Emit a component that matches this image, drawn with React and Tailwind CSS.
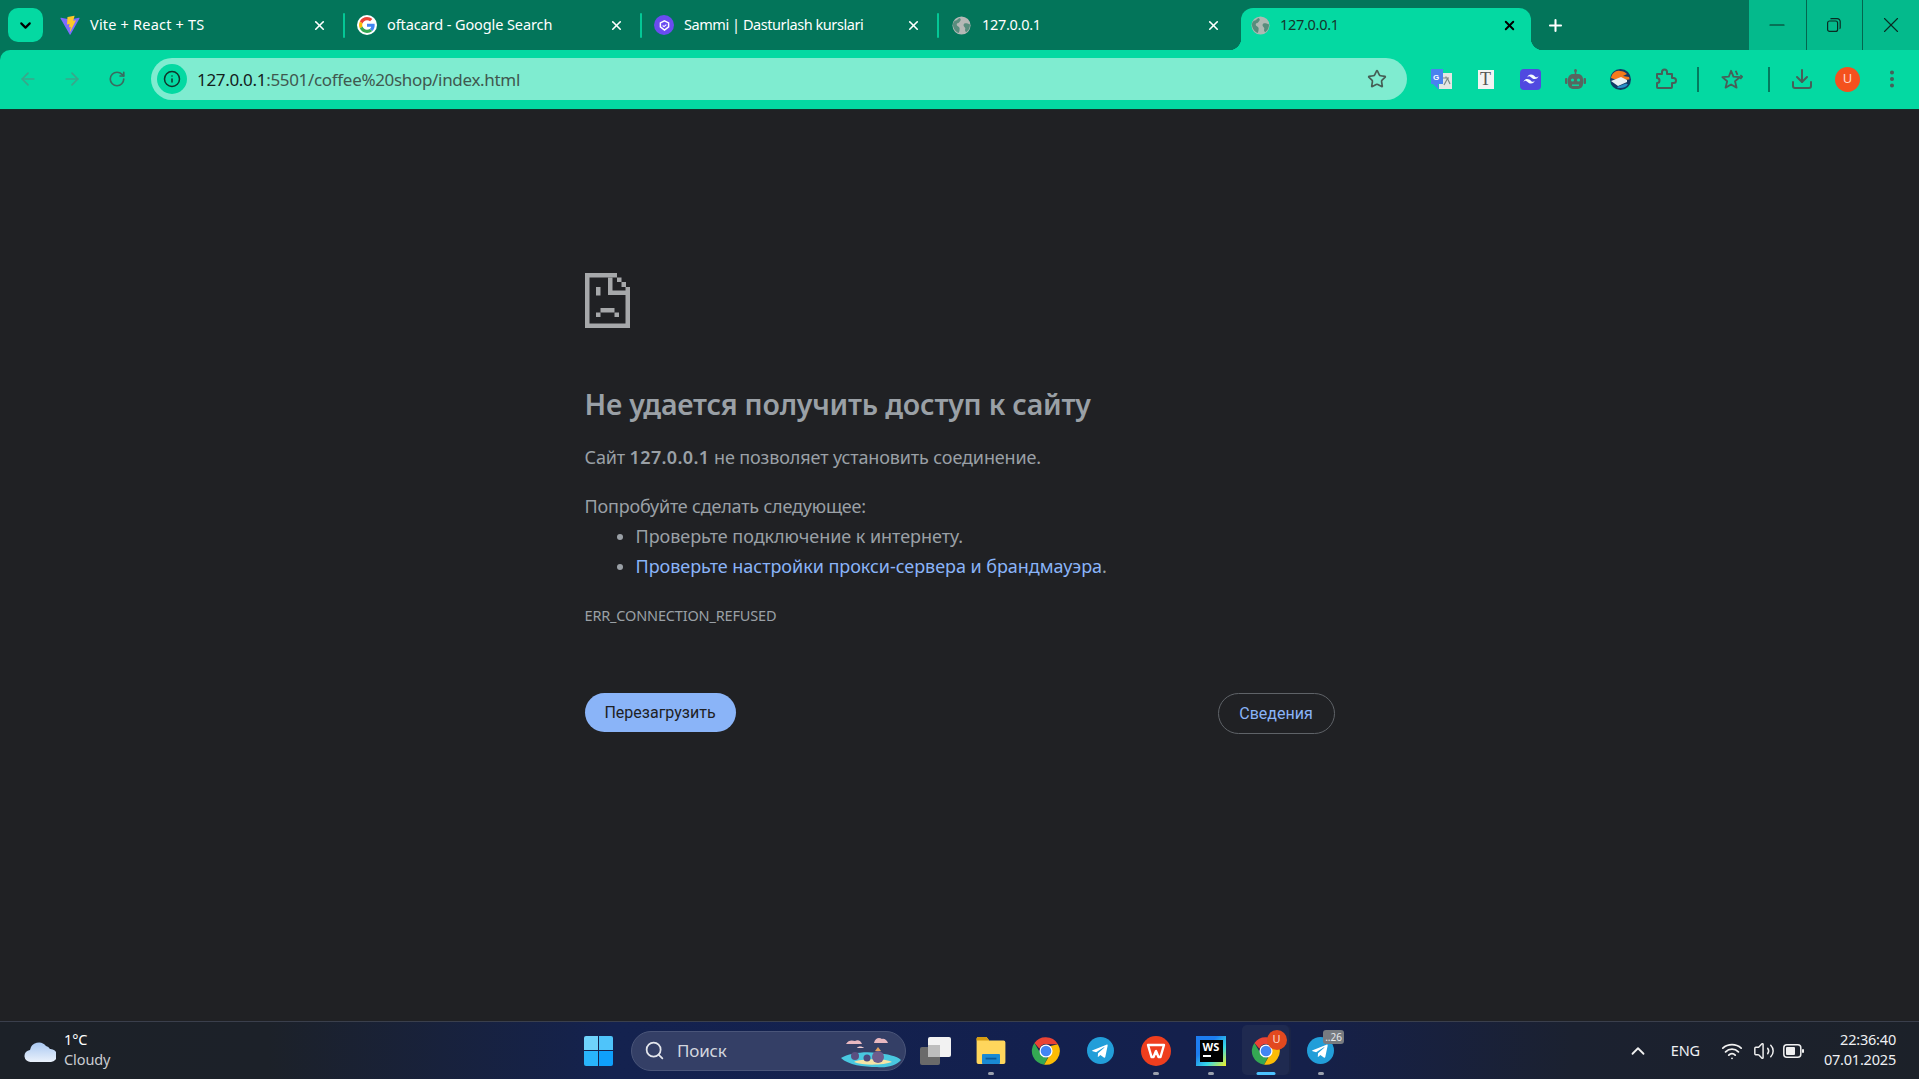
import React from "react";
import { ArrowLeft, ArrowRight, RotateCw, Star, X, Plus, Minus, Info, Download, EllipsisVertical, ChevronUp, ChevronDown, Search, Wifi, Volume2 } from "lucide-react";

const seg = "font-['Noto_Sans','Liberation_Sans',sans-serif]";

const Globe = ({ c = "#b5b8b6" }) => (
  <svg width="19" height="19" viewBox="0 0 20 20">
    <circle cx="10" cy="10" r="9.5" fill={c} />
    <path d="M3 5c2 0 3-2 5-3 2 1 1 3 0 4-1 2-3 1-3 3 0 2 3 2 3 4 0 2 0 3-1 5C4 17 1 13 1 9c0-2 1-3 2-4zM13 8c2-1 4 0 6 1 0 3-1 6-4 8-2-1-1-3-1-4-1-2-3-3-1-5z" fill="#3a7d69" opacity="0.75" />
  </svg>
);

const Vite = () => (
  <svg width="20" height="21" viewBox="0 0 410 404">
    <path d="M399.6 59.5 215.9 388.2c-3.8 6.8-13.5 6.8-17.4.1L11.2 59.5c-4.2-7.4 2.1-16.3 10.4-14.8l183.9 32.9c1.2.2 2.4.2 3.5 0l180-32.8c8.3-1.5 14.7 7.3 10.6 14.7z" fill="#7f6bff" />
    <path d="M292.9 1.6 156.9 28.2c-2.2.4-3.9 2.3-4 4.6l-8.4 141.5c-.2 3.3 2.9 5.9 6.1 5.2l37.9-8.8c3.5-.8 6.7 2.3 6 5.9l-11.3 55.2c-.8 3.7 2.7 6.9 6.3 5.8l23.4-7.1c3.6-1.1 7.1 2.1 6.3 5.8l-17.9 86.6c-1.1 5.4 6.1 8.4 9.1 3.7l2-3.1 110.9-221.4c1.9-3.7-1.3-7.9-5.4-7.1l-39 7.5c-3.7.7-6.8-2.7-5.8-6.3l25.5-88.2c1-3.6-2.1-7.1-5.8-6.3z" fill="#ffc928" />
  </svg>
);

const GoogleG = () => (
  <div className="flex h-5 w-5 items-center justify-center rounded-full bg-white">
    <svg width="16" height="16" viewBox="0 0 48 48">
      <path fill="#EA4335" d="M24 9.5c3.5 0 6.7 1.2 9.2 3.6l6.9-6.9C35.9 2.4 30.5 0 24 0 14.6 0 6.5 5.4 2.6 13.2l8 6.2C12.5 13.7 17.8 9.5 24 9.5z" />
      <path fill="#4285F4" d="M47 24.5c0-1.6-.1-3.1-.4-4.5H24v9h12.9c-.6 3-2.2 5.5-4.7 7.2l7.7 6c4.5-4.2 7.1-10.3 7.1-17.7z" />
      <path fill="#FBBC05" d="M10.5 28.6c-.5-1.5-.8-3-.8-4.6s.3-3.2.8-4.6l-8-6.2C.9 16.5 0 20.1 0 24s.9 7.5 2.6 10.8l7.9-6.2z" />
      <path fill="#34A853" d="M24 48c6.5 0 11.9-2.1 15.9-5.8l-7.7-6c-2.2 1.5-4.9 2.3-8.2 2.3-6.2 0-11.5-4.2-13.4-9.9l-8 6.2C6.5 42.6 14.6 48 24 48z" />
    </svg>
  </div>
);

const Sammi = () => (
  <div className="flex h-5 w-5 items-center justify-center rounded-full bg-[#6a4cf0]">
    <svg width="11" height="11" viewBox="0 0 12 12" fill="none" stroke="#fff" strokeWidth="1.6">
      <path d="M6 1l4.5 2.2v4.2L6 11 1.5 7.4V3.200z" />
      <path d="M4 6l1.5 1.2L8 5" strokeWidth="1.2" />
    </svg>
  </div>
);

const Tab = ({ icon, title, track }) => (
  <div className="flex h-10 w-[297px] shrink-0 items-center">
    <div className="ml-[-1px] flex w-5 shrink-0 justify-center">{icon}</div>
    <span className={`ml-[10px] flex-1 text-[14.5px] text-white ${track} ${seg}`}>{title}</span>
    <X size={15} strokeWidth={2.6} className="mr-[16px] text-white" />
    <div className="mr-[13px] h-[25px] w-[2px] rounded bg-[#04c896]" />
  </div>
);

const WinBtn = ({ children, border }) => (
  <div className={`flex h-full w-[57.5px] items-center justify-center ${border ? "border-l border-[#04664e]" : ""}`}>{children}</div>
);

const Extension = ({ children }) => <div className="flex h-[45px] w-[45px] shrink-0 items-center justify-center">{children}</div>;

const ChromeIcon = ({ s = 30 }) => (
  <svg width={s} height={s} viewBox="0 0 48 48">
    <path fill="#EA4335" d="M24 2a22 22 0 0 1 19 11H24a11 11 0 0 0-10.5 7.5L5.5 11A22 22 0 0 1 24 2z" />
    <path fill="#34A853" d="M5.5 11l9.5 16.5a11 11 0 0 0 12 6.600L21 45.800A22 22 0 0 1 5.5 11z" />
    <path fill="#FBBC05" d="M43 13a22 22 0 0 1-22 32.800l9.5-16.500A11 11 0 0 0 31 16z" />
    <circle cx="24" cy="24" r="10.5" fill="#fff" />
    <circle cx="24" cy="24" r="8.5" fill="#4285F4" />
  </svg>
);

const Telegram = ({ s = 27 }) => (
  <svg width={s} height={s} viewBox="0 0 24 24">
    <circle cx="12" cy="12" r="12" fill="#229ed9" />
    <path d="M5 11.800l12.300-5c.7-.2 1.300.2 1 1.200l-2 9.600c-.2.800-.7 1-1.400.6l-3-2.300-1.500 1.400c-.3.300-.5.400-.8.400l.2-3.200 5.700-5.200c.3-.2 0-.4-.4-.2l-7 4.500-3-.9c-.7-.2-.7-.6-.1-.900z" fill="#fff" />
  </svg>
);

const TaskSlot = ({ children, dot, active }) => (
  <div className="relative flex h-[55px] w-[55px] shrink-0 items-center justify-center">
    {active && <div className="absolute left-[4px] top-[2px] h-[50px] w-[47px] rounded-[5px] bg-[#1f2a50] shadow-[2px_0_0_#1a2447]" />}
    <div className="relative flex items-center justify-center">{children}</div>
    {dot && <div className={`absolute bottom-[3px] left-1/2 h-[3px] -translate-x-1/2 rounded-full ${active ? "w-[19px] bg-[#4cc2ff]" : "w-[6px] bg-[#9aa0ad]"}`} />}
  </div>
);

export default function App() {
  return (
    <div className={`flex h-[1079px] w-[1919px] flex-col overflow-hidden bg-[#03755a] ${seg}`}>
      {/* tab strip */}
      <div className="flex h-[50px] shrink-0 bg-[#03755a]">
        <div className="ml-2 mt-2 flex h-[34px] w-[35px] shrink-0 items-center justify-center rounded-[10px] bg-[#04d9a2]">
          <ChevronDown size={17} strokeWidth={3} className="text-black" />
        </div>
        <div className="ml-[18px] mt-[5px] flex h-10">
          <Tab icon={<Vite />} title="Vite + React + TS" track="tracking-[0.2px]" />
          <Tab icon={<GoogleG />} title="oftacard - Google Search" track="tracking-[-0.1px]" />
          <Tab icon={<Sammi />} title="Sammi | Dasturlash kurslari" track="tracking-[-0.44px]" />
          <div className="flex h-10 w-[290px] shrink-0 items-center">
            <Globe />
            <span className="ml-[11px] flex-1 text-[14.5px] tracking-[-0.3px] text-white">127.0.0.1</span>
            <X size={15} strokeWidth={2.6} className="mr-[21px] text-white" />
          </div>
        </div>
        <div className="relative ml-[-1px] mt-[8px] flex h-[42px] w-[290px] shrink-0 items-center rounded-t-[12px] bg-[#04d9a2] pb-[8px] pl-[10px]">
          <div className="absolute bottom-0 left-[-12px] h-3 w-3 bg-[radial-gradient(circle_at_0_0,#03755a_12px,#04d9a2_12.5px)]" />
          <div className="absolute bottom-0 right-[-12px] h-3 w-3 bg-[radial-gradient(circle_at_100%_0,#03755a_12px,#04d9a2_12.5px)]" />
          <Globe c="#aeb9b3" />
          <span className="ml-[10px] flex-1 text-[14.5px] tracking-[-0.3px] text-[#14342b]">127.0.0.1</span>
          <X size={15} strokeWidth={3} className="mr-[14px] text-black" />
        </div>
        <div className="ml-[14px] flex h-10 w-[20px] shrink-0 items-center justify-center self-center">
          <Plus size={19} strokeWidth={2.6} className="text-white" />
        </div>
        <div className="ml-auto flex h-[50px] w-[170px] shrink-0 bg-[#04ba8c]">
          <WinBtn><Minus size={24} strokeWidth={1.2} className="text-[#0a2b22]" /></WinBtn>
          <WinBtn border>
            <svg width="14" height="14" viewBox="0 0 14 14" fill="none" stroke="#0a2b22" strokeWidth="1.2">
              <rect x="0.6" y="3" width="10" height="10.4" rx="2" />
              <path d="M3.500 1.200c.3-.4.7-.6 1.200-.6h5.500a3 3 0 0 1 3 3v6c0 .6-.2 1-.6 1.200" />
            </svg>
          </WinBtn>
          <WinBtn border><X size={26} strokeWidth={1} className="text-[#0a2b22]" /></WinBtn>
        </div>
      </div>

      {/* toolbar */}
      <div className="flex h-[60px] shrink-0 items-center rounded-tl-[10px] border-b border-[#14302a] bg-[#04d9a2] pb-[1px] pl-[10px]">
        <div className="flex h-[45px] w-[36px] items-center justify-center"><ArrowLeft size={20} strokeWidth={2} className="text-[#3aa68a]" /></div>
        <div className="ml-[8px] flex h-[45px] w-[36px] items-center justify-center"><ArrowRight size={20} strokeWidth={2} className="text-[#3aa68a]" /></div>
        <div className="ml-[9px] flex h-[45px] w-[36px] items-center justify-center"><RotateCw size={18} strokeWidth={2.2} className="text-[#3a6b5f]" /></div>
        <div className="ml-[16px] flex h-[42px] w-[1256px] shrink-0 items-center rounded-full bg-[#7fecd0] pl-[6px]">
          <div className="flex h-[30px] w-[30px] items-center justify-center rounded-full bg-[#04d9a2]">
            <Info size={18} strokeWidth={2} className="text-[#10342b]" />
          </div>
          <span className="ml-[10px] pt-[1px] text-[17px] tracking-[-0.32px] text-[#40584f]">
            <span className="text-[#13201c]">127.0.0.1</span>:5501/coffee%20shop/index.html
          </span>
          <Star size={20} strokeWidth={2} className="ml-auto mr-[20px] text-[#465e55]" />
        </div>
        <div className="ml-[11px] flex items-center">
          <Extension>
            <svg width="22" height="21" viewBox="0 0 22 21">
              <rect x="9" y="4" width="13" height="16" fill="#e4e6e4" />
              <path d="M13 9h6M16 7.500v1.500M14 16l3.500-6.500L20 15" stroke="#7d8a86" strokeWidth="1.2" fill="none" />
              <path d="M1 0h12v15H8l1 6-6-6H1z" fill="#4a82ef" />
              <text x="3" y="10.500" fontSize="8" fontWeight="700" fill="#fff" fontFamily="'Liberation Sans',sans-serif">G</text>
            </svg>
          </Extension>
          <Extension>
            <div className="flex h-[19px] w-[16px] items-center justify-center bg-[#f2f3f2] font-['Liberation_Serif',serif] text-[18px] leading-[19px] text-[#555]">T</div>
          </Extension>
          <Extension>
            <div className="flex h-[21px] w-[21px] items-center justify-center rounded-[4px] bg-[#5049e0]">
              <svg width="18" height="18" viewBox="0 0 24 24" fill="#f4fbfe">
                <path d="M12 6c-2.67 0-4.33 1.33-5 4 1-1.33 2.17-1.83 3.5-1.5.76.19 1.31.74 1.91 1.35.98 1 2.12 2.15 4.59 2.15 2.67 0 4.33-1.33 5-4-1 1.33-2.17 1.83-3.5 1.5-.76-.19-1.31-.74-1.91-1.35C15.61 7.15 14.47 6 12 6zM7 12c-2.67 0-4.33 1.33-5 4 1-1.33 2.17-1.83 3.5-1.5.76.19 1.31.74 1.91 1.35C8.39 16.85 9.53 18 12 18c2.67 0 4.33-1.33 5-4-1 1.33-2.17 1.83-3.5 1.5-.76-.19-1.31-.74-1.91-1.35C10.61 13.15 9.47 12 7 12z" />
              </svg>
            </div>
          </Extension>
          <Extension>
            <svg width="21" height="21" viewBox="0 0 21 21" fill="#566660">
              <circle cx="10.500" cy="1.500" r="1.500" />
              <rect x="9.700" y="2" width="1.600" height="3" />
              <rect x="3" y="5" width="15" height="15" rx="5" />
              <rect x="0" y="9" width="2.500" height="6" rx="1" />
              <rect x="18.500" y="9" width="2.500" height="6" rx="1" />
              <circle cx="7.500" cy="11" r="1.600" fill="#04d9a2" />
              <circle cx="13.500" cy="11" r="1.600" fill="#04d9a2" />
              <rect x="7" y="15.500" width="7" height="1.400" fill="#04d9a2" />
            </svg>
          </Extension>
          <Extension>
            <svg width="21" height="21" viewBox="0 0 21 21">
              <circle cx="10.500" cy="10.500" r="10.500" fill="#123a66" />
              <path d="M1 9c1-5 5-8 9-7 3 0 5 1 7 3l-4 2 6 1c.5 1 .5 2 .3 2.500L7 11z" fill="#f47a1c" />
              <path d="M1 12l10-4 6 3v2L8 17z" fill="#e8f0f5" />
              <path d="M7 18.500c3 1 8 1 11-3l-2-1-8 3z" fill="#2a8fc7" />
            </svg>
          </Extension>
          <Extension>
            <svg width="22" height="22" viewBox="0 0 22 22" fill="none" stroke="#475f58" strokeWidth="2" strokeLinejoin="round">
              <path d="M2 6h5V4a2.500 2.500 0 0 1 5 0v2h5v4h1.500a2.500 2.500 0 0 1 0 5H17v4a1 1 0 0 1-1 1H3a1 1 0 0 1-1-1v-4a2.500 2.500 0 0 0 0-5z" />
            </svg>
          </Extension>
        </div>
        <div className="ml-[9px] h-[25px] w-[2px] bg-[#047a5e]" />
        <div className="ml-[10px] flex w-[46px] justify-center">
          <svg width="22" height="22" viewBox="0 0 24 24" fill="none" stroke="#475f58" strokeWidth="2" strokeLinejoin="round">
            <path d="M11 3l2.600 6.500 7 .500-5.300 4.400 1.700 7L11 18l-6 3.400 1.700-7L1.500 10l7-.500z" />
            <path d="M16 3l2 4.500M21 8l2 1.500-2 2.500" />
          </svg>
        </div>
        <div className="ml-[13px] h-[25px] w-[2px] bg-[#047a5e]" />
        <Extension><Download size={24} strokeWidth={2} className="ml-[19px] text-[#475f58]" /></Extension>
        <div className="ml-[20px] flex h-[25px] w-[25px] items-center justify-center rounded-full bg-[#f4511e] text-[13px] text-[#ffd9cc]">U</div>
        <EllipsisVertical size={22} strokeWidth={2.4} className="ml-[21px] text-[#475f58]" />
      </div>

      {/* error page */}
      <main className="min-h-0 flex-1 bg-[#202124]">
        <div className="mx-auto w-[750px] pt-[163px]">
          <svg width="45" height="55" viewBox="0 0 45 55" fill="#a6a8aa">
            <path d="M0 0h32v4.500H4.500v46h36V14H45v41H0z" />
            <path d="M23 4.500h4.500v13H41V22H23z" />
            <rect x="32" y="4.500" width="4.500" height="4.500" />
            <rect x="36.500" y="9" width="4.500" height="5" />
            <rect x="11" y="14" width="4.500" height="8.500" />
            <rect x="15.500" y="35" width="14" height="4.500" />
            <rect x="11" y="39.500" width="4.500" height="4.500" />
            <rect x="29.500" y="39.500" width="4.500" height="4.500" />
          </svg>
          <h1 className="mt-[57px] text-[28.5px] font-semibold leading-[38px] tracking-[-0.2px] text-[#9aa0a6]">Не удается получить доступ к сайту</h1>
          <p className="mt-[19px] text-[18px] leading-[30px] tracking-[-0.13px] text-[#9aa0a6]">
            Сайт <b className="font-semibold tracking-[0.35px]">127.0.0.1</b> не позволяет установить соединение.
          </p>
          <p className="mt-[19px] text-[18px] leading-[30px] tracking-[-0.2px] text-[#9aa0a6]">Попробуйте сделать следующее:</p>
          <ul className="list-disc pl-[51px] text-[18px] leading-[30px] tracking-[-0.05px] text-[#9aa0a6]">
            <li>Проверьте подключение к интернету.</li>
            <li><span className="text-[#8ab4f8]">Проверьте настройки прокси-сервера и брандмауэра</span>.</li>
          </ul>
          <div className="mt-[19px] text-[14.5px] leading-[30px] tracking-[-0.17px] text-[#9aa0a6]">ERR_CONNECTION_REFUSED</div>
          <div className="mt-[63px] flex items-start justify-between">
            <button className="h-[39px] w-[151px] rounded-full bg-[#8ab4f8] font-['Roboto',sans-serif] text-[16px] text-[#202124]">Перезагрузить</button>
            <button className="h-[41px] w-[117px] rounded-full border border-[#5f6368] font-['Roboto',sans-serif] text-[16px] text-[#8ab4f8]">Сведения</button>
          </div>
        </div>
      </main>

      {/* taskbar */}
      <div className="relative flex h-[58px] shrink-0 items-center border-t border-[#3a3f4c] bg-[linear-gradient(90deg,#1c2128_0%,#1c2129_14%,#14224f_32%,#13204e_55%,#15204a_68%,#1b2130_82%,#1c2129_100%)]">
        <div className="ml-[24px] flex w-[250px] shrink-0 items-center">
          <svg width="32" height="26" viewBox="0 0 32 26">
            <defs>
              <linearGradient id="cl" x1="0" x2="0" y1="0" y2="1">
                <stop offset="0" stopColor="#a9c8f2" />
                <stop offset="1" stopColor="#eaf1fb" />
              </linearGradient>
            </defs>
            <path d="M7 24a6 6 0 0 1-1-12 9 9 0 0 1 16-4 7 7 0 0 1 4 3 6.500 6.500 0 0 1 1 13z" fill="url(#cl)" />
          </svg>
          <div className="ml-[8px] flex flex-col pb-[4px] text-[14.5px] leading-[20px] tracking-[-0.1px]">
            <span className="text-white">1°C</span>
            <span className="text-[#c9ccd2]">Cloudy</span>
          </div>
        </div>
        <div className="ml-[310px] flex items-center">
          <div className="grid h-[30px] w-[29px] shrink-0 grid-cols-2 gap-[1.5px]">
            <div className="rounded-tl-[2px] bg-[#6fd3fb]" />
            <div className="rounded-tr-[2px] bg-[#4fc4fa]" />
            <div className="rounded-bl-[2px] bg-[#29b4fb]" />
            <div className="rounded-br-[2px] bg-[#0f9ffb]" />
          </div>
          <div className="relative ml-[18px] mr-[2px] flex h-[40px] w-[275px] shrink-0 items-center rounded-full border border-[#4a5579] bg-[#343f66] pl-[12px]">
            <Search size={21} strokeWidth={2} className="text-[#e4e6ec]" />
            <span className="ml-[12px] text-[17px] tracking-[-0.2px] text-[#d3d6de]">Поиск</span>
            <svg width="62" height="40" viewBox="0 0 62 40" className="absolute right-[3px] top-0">
              <path d="M6 12c2-4 6-4 9-3 3-2 6 0 7 3zM34 11c1-5 5-6 8-4 2-1 5 1 6 4z" fill="#e8b8c0" />
              <path d="M17 16c1-2 5-2 7 0z" fill="#f3cfd3" />
              <path d="M1 26c8-5 25-7 36-5 10 1 20 3 24 7-5 6-15 8-24 7-13 0-29-2-36-9z" fill="#49c8e0" />
              <path d="M14 30c5-3 30-4 38 0-8 3-28 4-38 0z" fill="#f5e4a6" />
              <circle cx="15" cy="24" r="4" fill="#5a4f80" />
              <circle cx="27" cy="26" r="3.5" fill="#4b4a80" />
              <circle cx="38" cy="25" r="6" fill="#6d5c8c" />
              <path d="M35 19l3-4 3 4z" fill="#e0a060" />
            </svg>
          </div>
          <TaskSlot>
            <div className="relative h-[28px] w-[32px]">
              <div className="absolute bottom-0 left-0 h-[18px] w-[20px] rounded-[2px] bg-[#6a6a6a]" />
              <div className="absolute right-[1px] top-0 h-[20px] w-[23px] rounded-[2px] bg-[#f2f2f2]" />
              <div className="absolute bottom-[8px] left-[8px] h-[12px] w-[12px] bg-[#bdbdbd]" />
            </div>
          </TaskSlot>
          <TaskSlot dot>
            <svg width="30" height="27" viewBox="0 0 32 30">
              <path d="M0 2a2 2 0 0 1 2-2h9l3 4h16a2 2 0 0 1 2 2v22a2 2 0 0 1-2 2H2a2 2 0 0 1-2-2z" fill="#ffd65c" />
              <path d="M0 2a2 2 0 0 1 2-2h9l3 4H0z" fill="#d69c12" />
              <rect x="6" y="19" width="20" height="11" rx="1" fill="#1a8ad4" />
              <rect x="10" y="23" width="12" height="2" fill="#0b5a9a" />
            </svg>
          </TaskSlot>
          <TaskSlot><ChromeIcon /></TaskSlot>
          <TaskSlot><Telegram /></TaskSlot>
          <TaskSlot dot>
            <svg width="30" height="30" viewBox="0 0 30 30">
              <circle cx="15" cy="15" r="15" fill="#ef3e1e" />
              <path d="M7 9h16l-3.500 12h-2L15 15l-2.500 6h-2z" fill="none" stroke="#fff" strokeWidth="2.4" strokeLinejoin="round" />
            </svg>
          </TaskSlot>
          <TaskSlot dot>
            <div className="relative h-[30px] w-[30px]">
              <div className="absolute inset-0 bg-[linear-gradient(135deg,#1d7df0_0%,#1d7df0_35%,#35d8e8_65%,#f7f020_100%)]" />
              <div className="absolute left-[4px] top-[4px] flex h-[22px] w-[23px] flex-col bg-black px-[3px] text-[11px] font-bold leading-[13px] text-white">
                WS
                <div className="mt-[2px] h-[2px] w-[8px] bg-white" />
              </div>
            </div>
          </TaskSlot>
          <TaskSlot dot active>
            <ChromeIcon />
            <div className="absolute right-[-6px] top-[-6px] flex h-[20px] w-[20px] items-center justify-center rounded-full bg-[#e2491f] text-[11px] text-[#ffd9cc]">U</div>
          </TaskSlot>
          <TaskSlot dot>
            <Telegram />
            <div className="absolute right-[-10px] top-[-7px] rounded-[3px] bg-[#777b80] px-[2px] text-[10px] leading-[14px] text-[#e9eaec]">..26</div>
          </TaskSlot>
        </div>
        <div className="ml-auto flex items-center pr-[23px] text-white">
          <ChevronUp size={22} strokeWidth={2} className="text-[#f0f0f0]" />
          <span className="ml-[22px] text-[14.5px] tracking-[-0.2px] text-[#eef0f3]">ENG</span>
          <Wifi size={22} strokeWidth={2} className="ml-[21px] text-[#f0f0f0]" />
          <Volume2 size={22} strokeWidth={1.6} className="ml-[10px] text-[#f0f0f0]" />
          <svg width="21" height="14" viewBox="0 0 21 14" className="ml-[8px]">
            <rect x="0.8" y="0.8" width="17" height="12.4" rx="3" fill="none" stroke="#f0f0f0" strokeWidth="1.5" />
            <rect x="3" y="3" width="9" height="8" rx="1" fill="#f0f0f0" />
            <rect x="19" y="5" width="2" height="4" rx="1" fill="#f0f0f0" />
          </svg>
          <div className="ml-[20px] flex flex-col items-end pb-[3px] text-[14.5px] leading-[20px] tracking-[-0.2px] text-[#eef0f3]">
            <span>22:36:40</span>
            <span>07.01.2025</span>
          </div>
        </div>
      </div>
    </div>
  );
}
